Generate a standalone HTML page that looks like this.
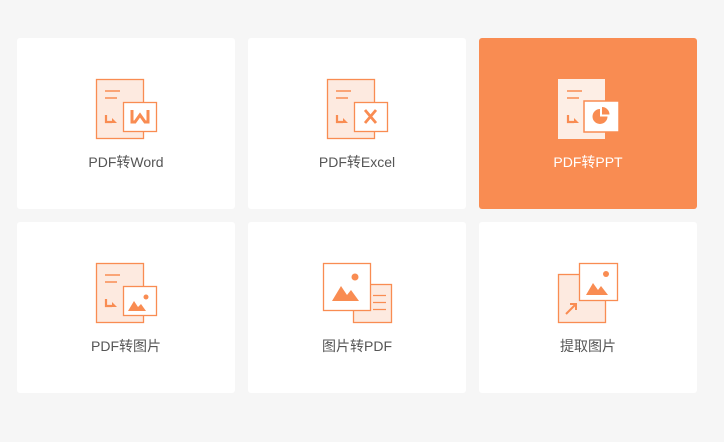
<!DOCTYPE html>
<html><head><meta charset="utf-8"><style>
html,body{margin:0;padding:0}
body{width:724px;height:442px;background:#f6f6f6;position:relative;overflow:hidden;font-family:"Liberation Sans","Noto Sans CJK SC",sans-serif}
.c{position:absolute;width:218px;height:171px;background:#fff;border-radius:3px}
.c svg{position:absolute;left:0;top:0}
.c .t{position:absolute;left:0;right:0;top:115px;text-align:center;font-size:14px;color:#555;line-height:18px}
.h{background:#f98c52}.h .t{color:#fff}
</style></head><body>
<div class="c" style="left:17px;top:38px"><svg width="218" height="171">
<rect x="79.5" y="41.5" width="47" height="59" fill="#fdeae0" stroke="#f98c52" stroke-width="1.3"/>
<path d="M88 53h15M88 60h12" stroke="#f98c52" stroke-width="1.4"/><path d="M89 77v7h6" stroke="#f98c52" stroke-width="2.2" fill="none"/><path d="M95 80l5 5h-5z" fill="#f98c52"/>
<rect x="106.5" y="64.5" width="33" height="29" fill="#fff" stroke="#f98c52" stroke-width="1.3"/>
<path d="M115 72v12h3l5-7 5 7h3V72" stroke="#f98c52" stroke-width="3" fill="none" stroke-linejoin="miter"/>
</svg><div class="t">PDF转Word</div></div>
<div class="c" style="left:248px;top:38px"><svg width="218" height="171">
<rect x="79.5" y="41.5" width="47" height="59" fill="#fdeae0" stroke="#f98c52" stroke-width="1.3"/>
<path d="M88 53h15M88 60h12" stroke="#f98c52" stroke-width="1.4"/><path d="M89 77v7h6" stroke="#f98c52" stroke-width="2.2" fill="none"/><path d="M95 80l5 5h-5z" fill="#f98c52"/>
<rect x="106.5" y="64.5" width="33" height="29" fill="#fff" stroke="#f98c52" stroke-width="1.3"/>
<path d="M117 72l11 13M128 72l-11 13" stroke="#f98c52" stroke-width="2.8"/>
</svg><div class="t">PDF转Excel</div></div>
<div class="c h" style="left:479px;top:38px"><svg width="218" height="171">
<rect x="79" y="41" width="47" height="60" fill="#fdeee5"/>
<path d="M88 53h15M88 60h12" stroke="#f98c52" stroke-width="1.4"/><path d="M89 77v7h6" stroke="#f98c52" stroke-width="2.2" fill="none"/><path d="M95 80l5 5h-5z" fill="#f98c52"/>
<rect x="105" y="63" width="35" height="31" fill="#fff" stroke="#f98c52" stroke-width="1.5"/>
<path d="M121 71a7.5 7.5 0 1 0 7.5 7.5h-7.5z" fill="#f98c52"/><path d="M123 69v7.5h7.5a7.5 7.5 0 0 0-7.5-7.5z" fill="#f98c52"/>
</svg><div class="t">PDF转PPT</div></div>
<div class="c" style="left:17px;top:222px"><svg width="218" height="171">
<rect x="79.5" y="41.5" width="47" height="59" fill="#fdeae0" stroke="#f98c52" stroke-width="1.3"/>
<path d="M88 53h15M88 60h12" stroke="#f98c52" stroke-width="1.4"/><path d="M89 77v7h6" stroke="#f98c52" stroke-width="2.2" fill="none"/><path d="M95 80l5 5h-5z" fill="#f98c52"/>
<rect x="106.5" y="64.5" width="33" height="29" fill="#fff" stroke="#f98c52" stroke-width="1.3"/>
<path d="M111 89l6-10 4 6 3-3 5 7z" fill="#f98c52"/><circle cx="129" cy="75" r="2.5" fill="#f98c52"/>
</svg><div class="t">PDF转图片</div></div>
<div class="c" style="left:248px;top:222px"><svg width="218" height="171">
<rect x="105.5" y="62.5" width="38" height="38" fill="#fdeae0" stroke="#f98c52" stroke-width="1.3"/>
<path d="M125 73.5h13M125 80.5h13M125 87.5h13" stroke="#f98c52" stroke-width="1.3"/>
<rect x="75.5" y="41.5" width="47" height="47" fill="#fff" stroke="#f98c52" stroke-width="1.3"/>
<path d="M84 79l9-15 6 9 4-5 8 11z" fill="#f98c52"/><circle cx="107" cy="55" r="3.5" fill="#f98c52"/>
</svg><div class="t">图片转PDF</div></div>
<div class="c" style="left:479px;top:222px"><svg width="218" height="171">
<rect x="79.5" y="52.5" width="47" height="48" fill="#fdeae0" stroke="#f98c52" stroke-width="1.3"/>
<path d="M87 92l10-10M91 82h6v6" stroke="#f98c52" stroke-width="2" fill="none"/>
<rect x="100.5" y="41.5" width="38" height="37" fill="#fff" stroke="#f98c52" stroke-width="1.3"/>
<path d="M107 73l7-12 5 7 3-4 7 9z" fill="#f98c52"/><circle cx="127" cy="52" r="3" fill="#f98c52"/>
</svg><div class="t">提取图片</div></div>
</body></html>
